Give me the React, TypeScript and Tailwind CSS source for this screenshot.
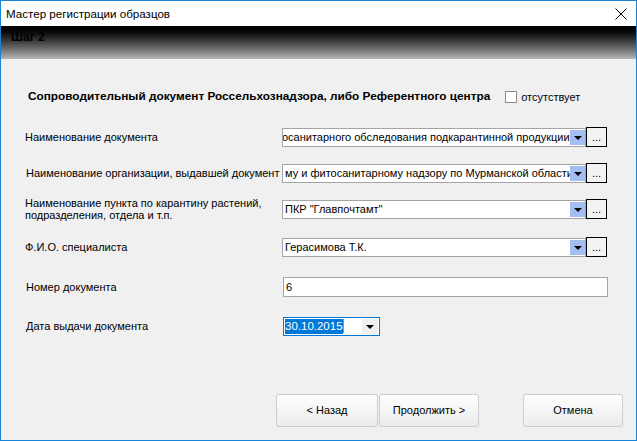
import React from 'react'

const font = { fontFamily: '"Liberation Sans", Arial, sans-serif' }

const DownArrow = () => (
    <div className="w-0 h-0 border-l-[4px] border-r-[4px] border-t-[4px] border-l-transparent border-r-transparent border-t-black mt-[1px]" />
)

const Combo = ({ text, shift = 0 }: { text: string; shift?: number }) => (
    <div className="flex items-center h-[20px]">
        <div className="flex items-stretch w-[304px] h-[19px] border border-[#a5a5a5] bg-white">
            <div className="flex-1 overflow-hidden whitespace-nowrap text-[11px] leading-[17px] pl-[2px]">
                <span style={{ marginLeft: shift }}>{text}</span>
            </div>
            <div className="w-[15px] my-[1px] bg-[#a3bff1] flex items-center justify-center">
                <DownArrow />
            </div>
        </div>
        <button className="w-[21px] h-[20px] border border-black bg-[#f3f3f3] text-[11px] leading-[14px] flex items-end justify-center pb-[2px]">
            ...
        </button>
    </div>
)

const Row = ({ label, children, top }: { label: React.ReactNode; children: React.ReactNode; top: string }) => (
    <div className={`flex items-center h-[20px] ${top}`}>
        <div className="w-[257px] shrink-0 text-[11px] leading-[12px] whitespace-nowrap">{label}</div>
        {children}
    </div>
)

const WizardButton = ({ title, w }: { title: string; w: string }) => (
    <button className={`${w} h-[33px] rounded-[3px] border border-[#cdcdcd] bg-gradient-to-b from-[#fefefe] to-[#ececec] text-[11px] text-black`}>
        {title}
    </button>
)

export default function App() {
    return (
        <div style={font} className="w-[637px] h-[441px] border border-[#1883d7] bg-[#f0f0f0] flex flex-col text-black">
            <div className="h-[25px] bg-white flex items-center justify-between pl-[5px] pr-[9px]">
                <span className="text-[11.6px]">Мастер регистрации образцов</span>
                <svg width="12" height="12" viewBox="0 0 12 12">
                    <path d="M0.5 0.5 L11.5 11.5 M11.5 0.5 L0.5 11.5" stroke="#000" strokeWidth="1" />
                </svg>
            </div>
            <div className="h-[33px] bg-gradient-to-b from-black to-[#b6b6b6] pl-[10px] pt-[4px] text-[12px] leading-[14px]">
                <span className="font-bold">Шаг 2</span>
            </div>

            <div className="pl-[24px]">
                <div className="flex items-center mt-[31px] pl-[3px] h-[14px]">
                    <span className="text-[11.8px] font-bold whitespace-nowrap">
                        Сопроводительный документ Россельхознадзора, либо Референтного центра
                    </span>
                    <div className="ml-[15px] w-[12px] h-[12px] border border-[#8c8c8c] bg-white" />
                    <span className="ml-[4px] text-[11px]">отсутствует</span>
                </div>

                <Row label="Наименование документа" top="mt-[23px]">
                    <Combo text="осанитарного обследования подкарантинной продукции" shift={-3} />
                </Row>
                <Row label={<span className="pl-[1px]">Наименование организации, выдавшей документ</span>} top="mt-[16px]">
                    <Combo text="му и фитосанитарному надзору по Мурманской области" />
                </Row>
                <Row
                    label={
                        <span className="block">
                            Наименование пункта по карантину растений,
                            <br />
                            подразделения, отдела и т.п.
                        </span>
                    }
                    top="mt-[16px]"
                >
                    <Combo text={'ПКР "Главпочтамт"'} />
                </Row>
                <Row label="Ф.И.О. специалиста" top="mt-[18px]">
                    <Combo text="Герасимова Т.К." />
                </Row>
                <Row label={<span className="pl-[1px]">Номер документа</span>} top="mt-[20px]">
                    <div className="ml-[1px] w-[325px] h-[20px] border border-[#a5a5a5] bg-white text-[11px] leading-[18px] pl-[2px]">
                        6
                    </div>
                </Row>
                <Row label={<span className="pl-[1px]">Дата выдачи документа</span>} top="mt-[19px]">
                    <div className="ml-[1px] w-[97px] h-[19px] border border-[#0078d7] bg-white flex items-center">
                        <span className="ml-[1px] bg-[#0078d7] text-white text-[11.5px] leading-[15px]">30.10.2015</span>
                        <span className="w-[1px] h-[14px] bg-[#e07b39]" />
                        <div className="ml-auto mr-[1px] w-[16px] h-[15px] bg-[#f0f0f0] flex items-center justify-center">
                            <DownArrow />
                        </div>
                    </div>
                </Row>
            </div>

            <div className="flex justify-end pr-[13px] mt-[58px]">
                <WizardButton title="< Назад" w="w-[102px]" />
                <div className="w-[1px]" />
                <WizardButton title="Продолжить >" w="w-[100px]" />
                <div className="w-[44px]" />
                <WizardButton title="Отмена" w="w-[100px]" />
            </div>
        </div>
    )
}
